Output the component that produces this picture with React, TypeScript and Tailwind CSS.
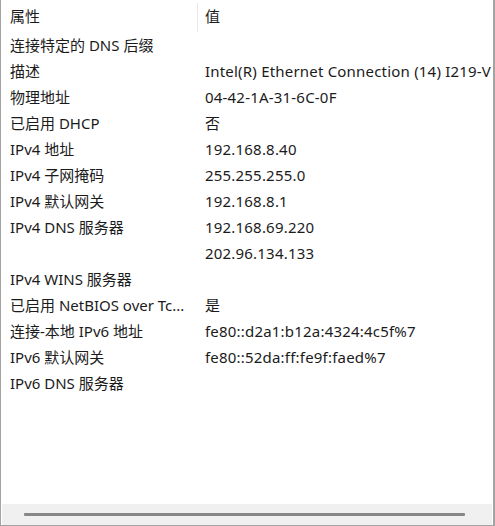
import React from 'react'

type Row = { name: string; value?: string }

const rows: Row[] = [
  { name: '连接特定的 DNS 后缀' },
  { name: '描述', value: 'Intel(R) Ethernet Connection (14) I219-V' },
  { name: '物理地址', value: '04-42-1A-31-6C-0F' },
  { name: '已启用 DHCP', value: '否' },
  { name: 'IPv4 地址', value: '192.168.8.40' },
  { name: 'IPv4 子网掩码', value: '255.255.255.0' },
  { name: 'IPv4 默认网关', value: '192.168.8.1' },
  { name: 'IPv4 DNS 服务器', value: '192.168.69.220' },
  { name: '', value: '202.96.134.133' },
  { name: 'IPv4 WINS 服务器' },
  { name: '已启用 NetBIOS over Tc...', value: '是' },
  { name: '连接-本地 IPv6 地址', value: 'fe80::d2a1:b12a:4324:4c5f%7' },
  { name: 'IPv6 默认网关', value: 'fe80::52da:ff:fe9f:faed%7' },
  { name: 'IPv6 DNS 服务器' },
]

function DetailRow({ row }: { row: Row }): JSX.Element {
  return (
    <div className="flex h-[26px] whitespace-nowrap leading-[26px]">
      <div className="w-[197px] shrink-0 overflow-hidden pl-[9px]">{row.name}</div>
      <div className="min-w-0 overflow-hidden pl-[7px] tracking-[0.2px]">{row.value}</div>
    </div>
  )
}

export default function App(): JSX.Element {
  return (
    <div className="flex h-[526px] w-[495px] flex-col overflow-hidden border-b border-l border-r-2 border-[#a3a3a3] bg-white font-['Noto_Sans','Noto_Sans_CJK_SC',sans-serif] text-[15px] text-[#1b1b1b]">
      <header className="flex h-[32px] shrink-0 whitespace-nowrap leading-[32px]">
        <div className="w-[196px] shrink-0 pl-[9px]">属性</div>
        <div className="mt-[3px] w-px bg-[#e8e8e8]" />
        <div className="pl-[7px]">值</div>
      </header>

      <div className="flex flex-col">
        {rows.map((row, i) => (
          <DetailRow key={i} row={row} />
        ))}
      </div>

      <div className="flex-1" />

      <div className="mx-[1px] flex h-[21px] shrink-0 items-center bg-[#f0f0f0] pl-[22px] pr-[27px]">
        <div className="h-[3px] flex-1 rounded-[1px] bg-[#878787]" />
      </div>
    </div>
  )
}
